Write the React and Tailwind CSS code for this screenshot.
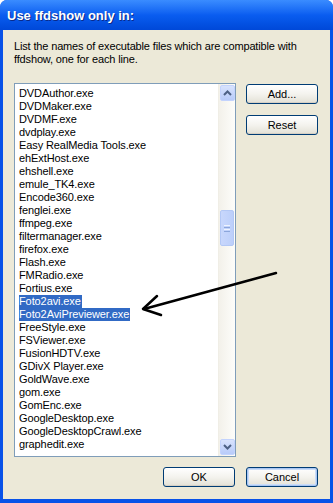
import React from "react";

const items = [
  "DVDAuthor.exe",
  "DVDMaker.exe",
  "DVDMF.exe",
  "dvdplay.exe",
  "Easy RealMedia Tools.exe",
  "ehExtHost.exe",
  "ehshell.exe",
  "emule_TK4.exe",
  "Encode360.exe",
  "fenglei.exe",
  "ffmpeg.exe",
  "filtermanager.exe",
  "firefox.exe",
  "Flash.exe",
  "FMRadio.exe",
  "Fortius.exe",
  "Foto2avi.exe",
  "Foto2AviPreviewer.exe",
  "FreeStyle.exe",
  "FSViewer.exe",
  "FusionHDTV.exe",
  "GDivX Player.exe",
  "GoldWave.exe",
  "gom.exe",
  "GomEnc.exe",
  "GoogleDesktop.exe",
  "GoogleDesktopCrawl.exe",
  "graphedit.exe",
];

const selected = new Set(["Foto2avi.exe", "Foto2AviPreviewer.exe"]);

function XpButton({ children, focused }) {
  return (
    <button
      className={
        "w-[72px] h-[20px] rounded-[3px] border border-[#003C74] bg-gradient-to-b from-[#FFFFFF] via-[#F4F3EE] to-[#E3E1D6] text-[11px] text-black leading-none flex items-center justify-center " +
        (focused ? "shadow-[inset_0_0_0_1px_#A9C6F2,inset_0_0_0_2px_#CBDDF8]" : "shadow-[inset_0_-1px_0_#D6D0C5]")
      }
    >
      {children}
    </button>
  );
}

function ScrollArrow({ up }) {
  return (
    <div className="w-[15px] h-[16px] mx-auto rounded-[2px] border border-[#C3D3FD] bg-gradient-to-b from-[#D8E3FD] to-[#B8CBF9] flex items-center justify-center">
      <svg width="9" height="6" viewBox="0 0 9 6">
        {up ? (
          <path d="M1 5 L4.5 1.5 L8 5" fill="none" stroke="#4D6185" strokeWidth="2" />
        ) : (
          <path d="M1 1 L4.5 4.5 L8 1" fill="none" stroke="#4D6185" strokeWidth="2" />
        )}
      </svg>
    </div>
  );
}

export default function App() {
  return (
    <div
      className="relative w-[333px] h-[503px] overflow-hidden rounded-t-[7px] bg-[#0852E8] flex flex-col"
      style={{ fontFamily: '"Liberation Sans", Arial, sans-serif' }}
    >
      <div className="h-[30px] shrink-0 bg-gradient-to-b from-[#3A8CFF] via-[#0A5DF0] to-[#0048D8] flex items-center pl-[7px] pt-[1px]">
        <span className="text-white font-bold text-[13px] [text-shadow:1px_1px_0_#0A2A8A]">
          Use ffdshow only in:
        </span>
      </div>
      <div className="flex-1 mx-[3px] mb-[4px] bg-[#ECE9D8] flex flex-col pl-[11px] pr-[12px] pt-[10px]">
        <p className="text-[11px] leading-[13px] text-black tracking-[-0.15px]">
          List the names of executable files which are compatible with
          <br />
          ffdshow, one for each line.
        </p>
        <div className="mt-[17px] flex gap-[10px]">
          <div className="w-[223px] h-[374px] border border-[#7F9DB9] bg-white flex">
            <div className="flex-1 pt-[3px] pl-[4px] overflow-hidden">
              {items.map((it) => (
                <div key={it} className="h-[13px] leading-[13px] text-[11px] tracking-[-0.1px]">
                  <span
                    className={
                      selected.has(it)
                        ? "bg-[#316AC5] text-white inline-block h-[13px] pr-[1px]"
                        : "text-black"
                    }
                  >
                    {it}
                  </span>
                </div>
              ))}
            </div>
            <div className="w-[17px] bg-gradient-to-r from-[#F3F1EA] to-[#FDFDFA] border-l border-[#F0EEE6] flex flex-col py-[1px]">
              <ScrollArrow up />
              <div className="flex-1 relative">
                <div className="mt-[109px] w-[14px] h-[36px] mx-auto rounded-[2px] border border-[#B3C8F5] bg-gradient-to-r from-[#C8D7FC] to-[#BCCFFA] flex flex-col items-center justify-center gap-[1px]">
                  <div className="w-[6px] h-[1px] bg-[#EEF3FE]" />
                  <div className="w-[6px] h-[1px] bg-[#8CA6DB]" />
                  <div className="w-[6px] h-[1px] bg-[#EEF3FE]" />
                  <div className="w-[6px] h-[1px] bg-[#8CA6DB]" />
                </div>
              </div>
              <ScrollArrow />
            </div>
          </div>
          <div className="flex flex-col gap-[11px] pt-[1px]">
            <XpButton>Add...</XpButton>
            <XpButton>Reset</XpButton>
          </div>
        </div>
        <div className="mt-[10px] flex justify-end gap-[10px]">
          <div className="w-[73px]">
            <XpButton>OK</XpButton>
          </div>
          <XpButton focused>Cancel</XpButton>
        </div>
      </div>
      <svg className="absolute left-0 top-0 pointer-events-none" width="333" height="503">
        <line x1="276" y1="273" x2="144" y2="309" stroke="#000" strokeWidth="2.5" strokeLinecap="round" />
        <polyline points="157,296 143,309 161,315" fill="none" stroke="#000" strokeWidth="2.5" strokeLinecap="round" strokeLinejoin="round" />
      </svg>
    </div>
  );
}
